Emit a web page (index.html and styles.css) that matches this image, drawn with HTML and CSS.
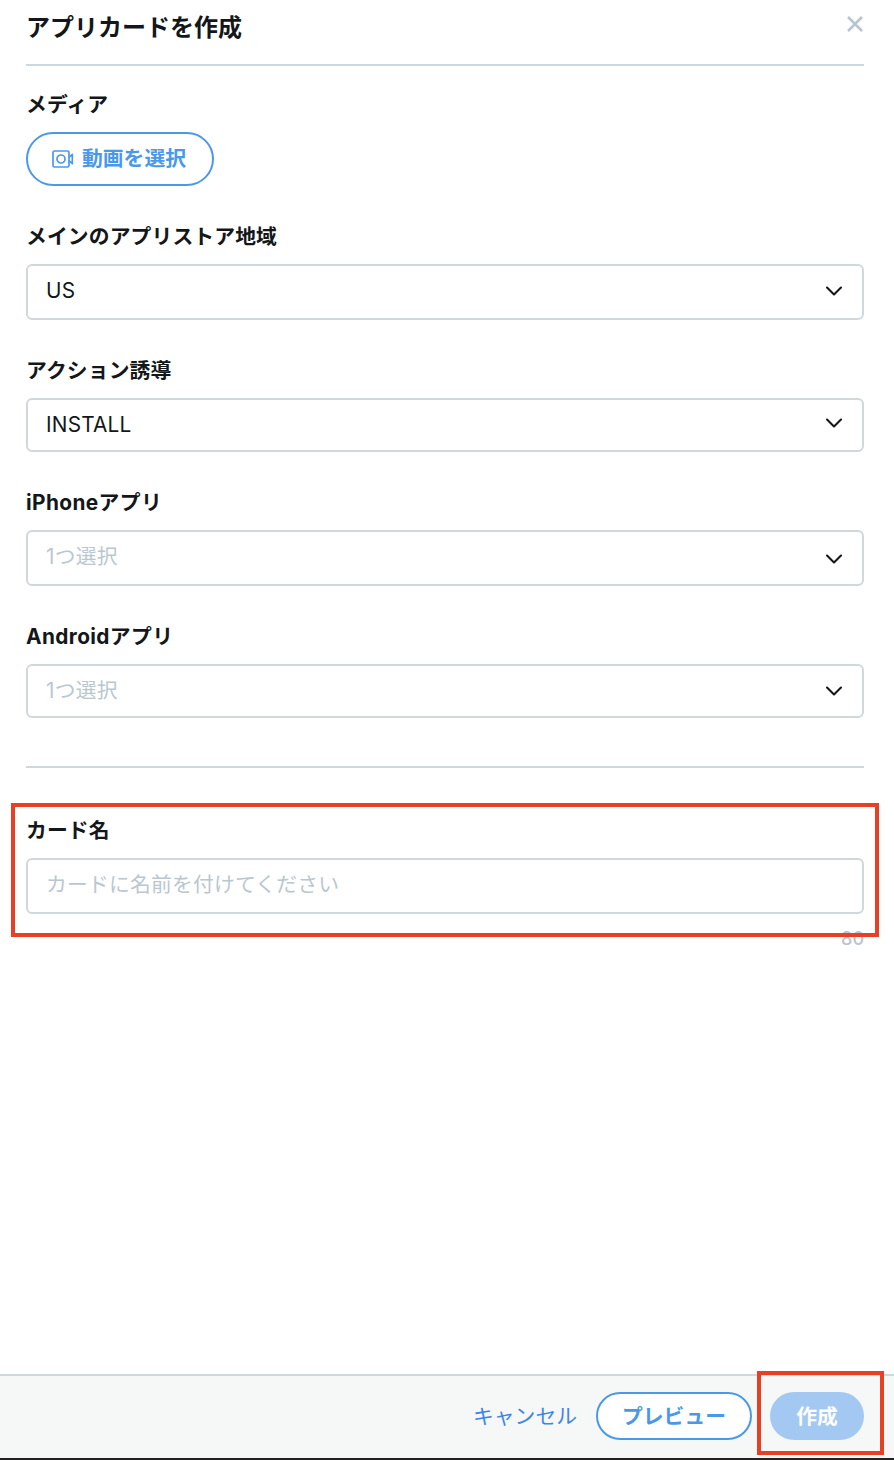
FILE: index.html
```html
<!DOCTYPE html>
<html lang="ja">
<head>
    <meta charset="UTF-8" />
    <meta name="viewport" content="width=device-width, initial-scale=1.0" />
    <title>アプリカードを作成</title>
    <link rel="stylesheet" href="styles.css">
</head>
<body>
    <div class="dialog">
        <header class="dialog-header">
            <h1>アプリカードを作成</h1>
            <svg class="close" viewBox="0 0 18 18"><path d="M2 2L16 16M16 2L2 16" /></svg>
        </header>

        <main class="form">
            <div class="field">
                <div class="label">メディア</div>
                <button class="btn media-btn">
                    <svg class="video-icon" viewBox="0 0 22 18">
                        <rect x="1" y="1" width="16" height="16" rx="1.5" />
                        <circle cx="9" cy="9" r="4" />
                        <path d="M17 7.5L20.3 4.3V13.7L17 10.5" />
                    </svg>
                    動画を選択
                </button>
            </div>

            <div class="field">
                <div class="label">メインのアプリストア地域</div>
                <div class="box tall">
                    <span>US</span>
                    <svg class="chevron" viewBox="0 0 18 12"><path d="M2 2.5L9 9.5L16 2.5" /></svg>
                </div>
            </div>

            <div class="field">
                <div class="label">アクション誘導</div>
                <div class="box">
                    <span>INSTALL</span>
                    <svg class="chevron raised" viewBox="0 0 18 12"><path d="M2 2.5L9 9.5L16 2.5" /></svg>
                </div>
            </div>

            <div class="field">
                <div class="label platform">iPhoneアプリ</div>
                <div class="box tall empty">
                    <span>1つ選択</span>
                    <svg class="chevron lowered" viewBox="0 0 18 12"><path d="M2 2.5L9 9.5L16 2.5" /></svg>
                </div>
            </div>

            <div class="field">
                <div class="label platform">Androidアプリ</div>
                <div class="box empty">
                    <span>1つ選択</span>
                    <svg class="chevron" viewBox="0 0 18 12"><path d="M2 2.5L9 9.5L16 2.5" /></svg>
                </div>
            </div>

            <div class="field card-name">
                <div class="label">カード名</div>
                <div class="box tall empty"><span>カードに名前を付けてください</span></div>
                <div class="counter">80</div>
                <div class="highlight"></div>
            </div>
        </main>

        <footer class="dialog-footer">
            <a class="cancel">キャンセル</a>
            <button class="btn preview">プレビュー</button>
            <div class="create-wrap">
                <button class="btn create">作成</button>
                <div class="highlight"></div>
            </div>
        </footer>
    </div>
</body>
</html>
```
FILE: styles.css
```css
* {
    box-sizing: border-box;
}

body {
    margin: 0;
    background: #fff;
    color: #14171a;
    font-family: Inter, "Noto Sans CJK JP", sans-serif;
    font-size: 20.8px;
    line-height: 28px;
}

.dialog {
    display: flex;
    flex-direction: column;
    height: 1460px;
    overflow: hidden;
    border-bottom: 2px solid #222;
}

.dialog-header {
    display: flex;
    justify-content: space-between;
    height: 66px;
    margin: 0 30px 0 26px;
    border-bottom: 2px solid #ced8de;
}

h1 {
    margin: 12px 0 0;
    font-size: 24px;
    font-weight: 700;
    line-height: 32px;
}

svg {
    fill: none;
    flex-shrink: 0;
}

.close {
    width: 18px;
    height: 18px;
    margin-top: 15px;
    stroke: #b7c5cf;
    stroke-width: 2.6;
}

.form {
    flex: 1;
    padding: 24px 30px 0 26px;
}

.field {
    margin-bottom: 36px;
}

.label {
    margin-bottom: 13px;
    padding-top: 1px;
    font-weight: 700;
    letter-spacing: 0.12px;
    white-space: nowrap;
}

.label.platform {
    letter-spacing: 0.4px;
}

.btn {
    display: flex;
    align-items: center;
    justify-content: center;
    height: 48px;
    padding: 2px 0 0;
    border: 2px solid #4a99e9;
    border-radius: 27px;
    background: #fff;
    color: #4a99e9;
    font: inherit;
    font-weight: 700;
    white-space: nowrap;
}

.media-btn {
    width: 188px;
    height: 54px;
    padding: 0 2px 0 0;
    gap: 8px;
}

.video-icon {
    width: 22px;
    height: 18px;
    stroke: #4a99e9;
    stroke-width: 1.7;
    stroke-linejoin: round;
}

.box {
    display: flex;
    align-items: center;
    justify-content: space-between;
    height: 54px;
    padding: 0 19px 0 18px;
    border: 2px solid #d0d8dc;
    border-radius: 6px;
    letter-spacing: 0.2px;
}

.box.tall {
    height: 56px;
    padding-bottom: 2px;
}

.box.empty {
    color: #bac7d0;
}

.chevron {
    width: 18px;
    height: 12px;
    stroke: #14171a;
    stroke-width: 2.1;
    stroke-linecap: round;
    stroke-linejoin: round;
}

.raised {
    margin-bottom: 4px;
}

.lowered {
    margin-top: 4px;
}

.card-name {
    position: relative;
    margin-top: 48px;
    padding-top: 48px;
    border-top: 2px solid #d0d8dc;
}

.counter {
    margin-top: 11px;
    color: #b7c5cf;
    font-size: 18px;
    font-weight: 500;
    text-align: right;
}

/* red callout frames */
.highlight {
    position: absolute;
    border: 4px solid #e94025;
}

.card-name .highlight {
    top: 35px;
    left: -15px;
    right: -15px;
    height: 134px;
}

.dialog-footer {
    display: flex;
    align-items: center;
    justify-content: flex-end;
    height: 84px;
    padding: 0 30px 2px 0;
    border-top: 2px solid #d0d8dc;
    background: #f6f8f8;
}

.cancel {
    margin-right: 19px;
    padding-top: 2px;
    color: #3f86e4;
}

.preview {
    width: 156px;
}

.create-wrap {
    position: relative;
    margin-left: 18px;
}

.create {
    width: 94px;
    border: none;
    background: #a3c9f3;
    color: #fff;
}

.create-wrap .highlight {
    top: -21px;
    left: -13px;
    width: 127px;
    height: 84px;
}
```
